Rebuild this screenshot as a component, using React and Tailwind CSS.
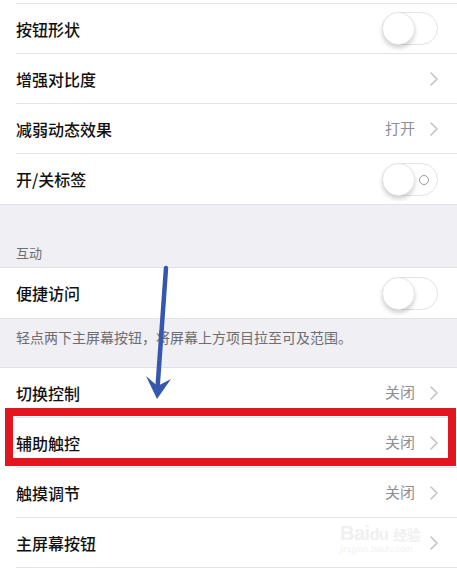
import React from "react";

const font = { fontFamily: '"Noto Sans CJK SC", "Noto Sans", sans-serif' };

function Chevron() {
  return (
    <svg width="8" height="14" viewBox="0 0 8 14" className="shrink-0">
      <polyline
        points="1,1 7,7 1,13"
        fill="none"
        stroke="#c4c4c8"
        strokeWidth="1.6"
        strokeLinecap="round"
        strokeLinejoin="round"
      />
    </svg>
  );
}

function Toggle({ label }) {
  return (
    <div className="relative h-[33px] w-[56px] shrink-0 rounded-full border border-[#e3e3e6] bg-white">
      <div className="absolute left-[-1px] top-[-1px] h-[33px] w-[33px] rounded-full border border-[#e6e6e8] bg-white shadow-[0_3px_4px_rgba(0,0,0,0.18)]" />
      {label && (
        <div className="absolute right-[8px] top-[11px] h-[10px] w-[10px] rounded-full border-[1.5px] border-[#9a9a9e]" />
      )}
    </div>
  );
}

function Row({ title, value, toggle, chevron, label, last }) {
  return (
    <div className="bg-white pl-4">
      <div
        className={
          "flex h-[50px] items-center justify-between pr-[19px] " +
          (last ? "" : "border-b border-[#e4e4e6]")
        }
      >
        <span className="text-[16px] font-medium text-[#111]">{title}</span>
        <div className="flex items-center gap-[15px]">
          {value && <span className="text-[15px] text-[#8e8e93]">{value}</span>}
          {toggle && <Toggle label={label} />}
          {chevron && <Chevron />}
        </div>
      </div>
    </div>
  );
}

export default function App() {
  return (
    <div className="relative h-[569px] w-[457px] overflow-hidden bg-white" style={font}>
      <div className="bg-white pl-4">
        <div className="h-[4px] border-b border-[#e4e4e6]" />
      </div>
      <Row title="按钮形状" toggle />
      <Row title="增强对比度" chevron />
      <Row title="减弱动态效果" value="打开" chevron />
      <Row title="开/关标签" toggle label last />

      <div className="flex h-[64px] items-end border-y border-[#e2e2e4] bg-[#efeff4] px-4 pb-[5px]">
        <span className="text-[13px] text-[#6d6d72]">互动</span>
      </div>
      <Row title="便捷访问" toggle last />
      <div className="h-[50px] border-y border-[#e2e2e4] bg-[#efeff4] px-4 pt-[5px]">
        <span className="text-[14px] text-[#6d6d72]">
          轻点两下主屏幕按钮，将屏幕上方项目拉至可及范围。
        </span>
      </div>

      <Row title="切换控制" value="关闭" chevron />
      <Row title="辅助触控" value="关闭" chevron />
      <Row title="触摸调节" value="关闭" chevron />
      <Row title="主屏幕按钮" chevron />

      {/* annotation: red frame */}
      <div className="pointer-events-none absolute left-[5px] top-[408px] h-[58px] w-[451px] border-[8px] border-[#e3161f]" />

      {/* annotation: arrow */}
      <svg
        className="pointer-events-none absolute left-0 top-0"
        width="457"
        height="569"
        viewBox="0 0 457 569"
      >
        <line x1="166" y1="268" x2="157.5" y2="388" stroke="#3657ae" strokeWidth="4.5" strokeLinecap="round" />
        <polygon points="146,376 157.5,386 171,379 157,399" fill="#3657ae" />
      </svg>

      {/* watermark */}
      <div className="pointer-events-none absolute left-[340px] top-[523px] flex flex-col items-start leading-none">
        <span className="text-[20px] font-bold tracking-tight text-[#f0f0f0]" style={{ fontFamily: '"Liberation Sans", sans-serif' }}>
          Bai<span className="text-[16px]">du</span> <span className="text-[14px]" style={font}>经验</span>
        </span>
        <span className="mt-[2px] text-[9px] text-[#f2f2f2]" style={{ fontFamily: '"Liberation Sans", sans-serif' }}>
          jingyan.baidu.com
        </span>
      </div>
    </div>
  );
}
